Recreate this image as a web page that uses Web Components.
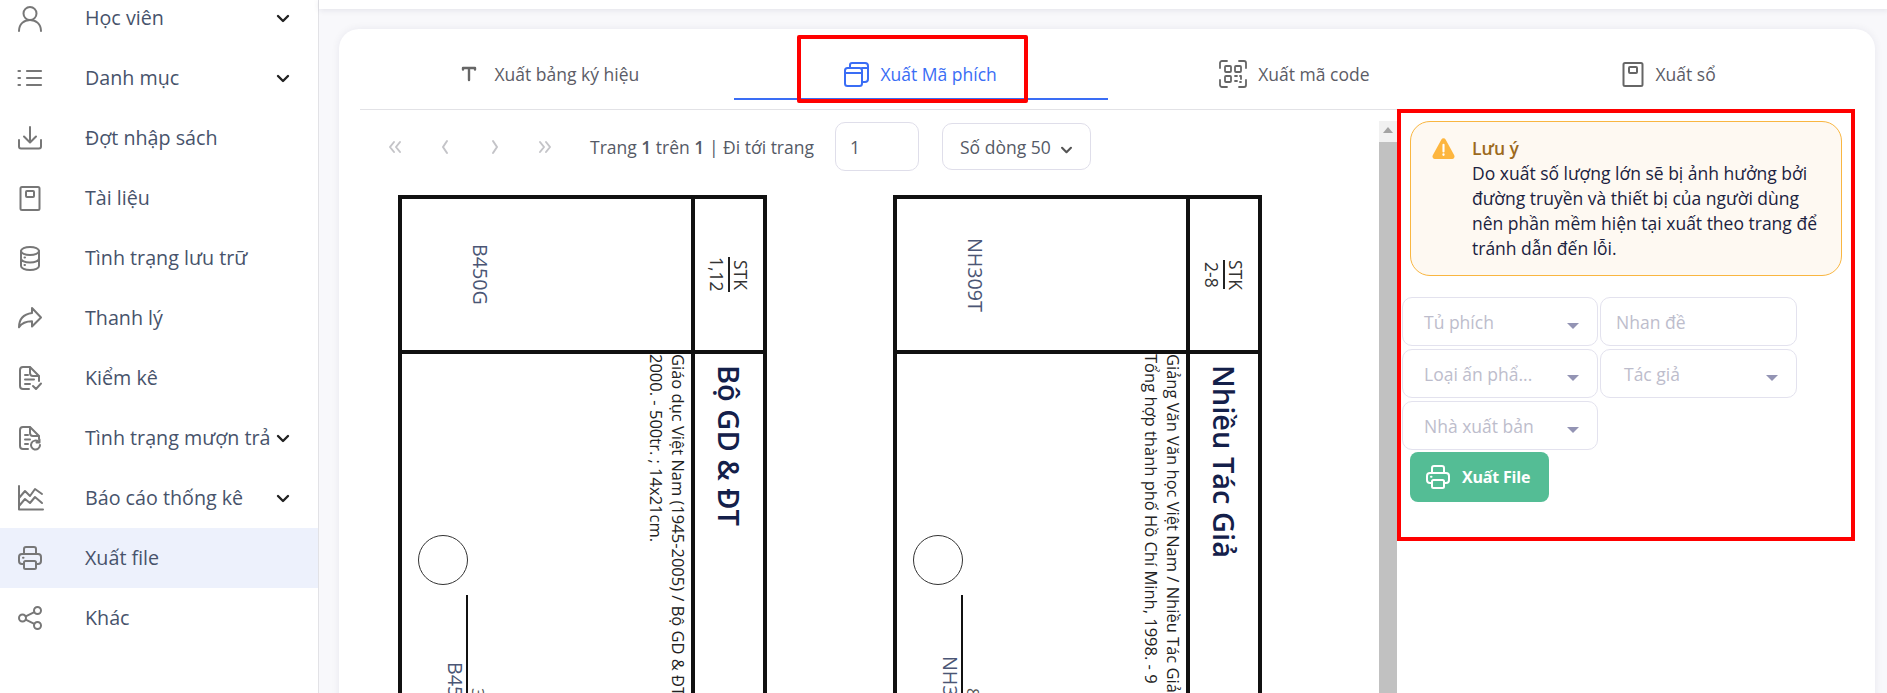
<!DOCTYPE html>
<html lang="vi">
<head>
<meta charset="utf-8">
<title>Xuất file</title>
<style>
  html, body { margin: 0; height: 693px; overflow: hidden; background: #f8f8fb; font-family: "Open Sans", sans-serif; }
</style>
</head>
<body>
<app-shell></app-shell>

<script>
const ICONS = {
  user: '<circle cx="12" cy="7.5" r="6.5"/><path d="M1 25c0-7 5-11 11-11s11 4 11 11"/>',
  list: '<path d="M9 5h14M9 12h14M9 19h14" stroke-width="2.2"/><path d="M0.5 5h1.5M0.5 12h1.5M0.5 19h1.5" stroke-width="2.2"/>',
  download: '<path d="M12 1v15M6 10.5l6 6 6-6"/><path d="M1 14v6.5a2 2 0 0 0 2 2h18a2 2 0 0 0 2-2V14"/>',
  book: '<rect x="2.5" y="1" width="19" height="23" rx="1.5"/><rect x="8" y="5" width="8" height="6" rx="1"/>',
  db: '<ellipse cx="12" cy="5" rx="9" ry="4"/><path d="M3 5v15c0 2.2 4 4 9 4s9-1.800 9-4V5M3 12.500c0 2.200 4 4 9 4s9-1.800 9-4"/><path d="M6.500 11.500h.5M6.500 19h.5"/>',
  forward: '<path d="M14 2l9 9.500-9 9v-5.200c-6 0-10 1.500-13 6 0-8 4-13 13-14.300z" stroke-linejoin="round"/>',
  doccheck: '<path d="M11 23H5a3 3 0 0 1-3-3V4a3 3 0 0 1 3-3h7l9 9v5"/><path d="M12 1.500V7a3 3 0 0 0 3 3h5.500M7 9h3M7 13.500h9M7 18h5"/><path d="M15 20l3 3 5-5.500"/>',
  docsync: '<path d="M10 23H5a3 3 0 0 1-3-3V4a3 3 0 0 1 3-3h7l9 9v3"/><path d="M12 1.500V7a3 3 0 0 0 3 3h5.500M7 9h3M7 13.500h5M7 18h3"/><path d="M22 19a4.500 4.500 0 1 1-1.500-3.300M21.500 13.500v3h-3"/>',
  chart: '<path d="M1 0v23.500h24"/><path d="M1 12l6-7 5 5 5-7 7 5M1 20l6-7 5 4 5-6 7 6"/>',
  printer: '<path d="M6 8V3a2 2 0 0 1 2-2h8a2 2 0 0 1 2 2v5"/><path d="M6 18H4a3 3 0 0 1-3-3v-4a3 3 0 0 1 3-3h16a3 3 0 0 1 3 3v4a3 3 0 0 1-3 3h-2"/><rect x="6" y="15" width="12" height="8" rx="1.500"/><path d="M5 11.800h.5"/>',
  nodes: '<circle cx="4.500" cy="12" r="3.500"/><circle cx="19.500" cy="4.500" r="3.500"/><circle cx="19.500" cy="19.500" r="3.500"/><path d="M7.700 10.400l8.600-4.300M7.700 13.600l8.600 4.300"/>',
  text: '<path d="M1 2.500V1h12v1.500M7 1v12"/>',
  cards: '<rect x="1" y="6" width="17" height="18" rx="2.500"/><path d="M1 11h17M6 6V3a2 2 0 0 1 2-2h13a3 3 0 0 1 3 3v13a3 3 0 0 1-3 3h-3M18 6h6"/>',
  qr: '<path d="M1 8V3a2 2 0 0 1 2-2h5M20 1h5a2 2 0 0 1 2 2v5M27 20v5a2 2 0 0 1-2 2h-5M8 27H3a2 2 0 0 1-2-2v-5"/><rect x="6" y="6" width="6" height="6" rx="1"/><rect x="16" y="6" width="6" height="6" rx="1"/><rect x="6" y="16" width="6" height="6" rx="1"/><path d="M16 16h2M21 16h1v3M16 21h2M21 22h1"/>',
  warn: '<path d="M9.800 1.600a2.500 2.500 0 0 1 4.400 0l9 16.500a2.500 2.500 0 0 1-2.200 3.700H3a2.500 2.500 0 0 1-2.200-3.700z" fill="#fdb63f" stroke="none"/><path d="M12 7v7" stroke="#fff" stroke-width="2.200"/><path d="M12 17.200v.4" stroke="#fff" stroke-width="2.400"/>',
  chevron: '<path d="M2 2l5 5 5-5"/>',
  first: '<path d="M6 2L2 7l4 5M12 2L8 7l4 5"/>',
  prev: '<path d="M9 1L5 7l4 6"/>',
  next: '<path d="M5 1l4 6-4 6"/>',
  last: '<path d="M2 2l4 5-4 5M8 2l4 5-4 5"/>'
};

class UiIcon extends HTMLElement {
  connectedCallback() {
    const size = this.getAttribute('size') || 24;
    const box = this.getAttribute('box') || '0 0 24 24';
    this.attachShadow({ mode: 'open' });
    this.shadowRoot.innerHTML = `
      <style>
        :host { display: inline-flex; flex: none; color: inherit; }
        svg { display: block; overflow: visible; fill: none; stroke: currentColor; stroke-width: ${this.getAttribute('weight') || 2}; stroke-linecap: round; stroke-linejoin: round; }
      </style>
      <svg width="${size}" height="${this.getAttribute('h') || size}" viewBox="${box}">${ICONS[this.getAttribute('name')]}</svg>
    `;
  }
}
customElements.define('ui-icon', UiIcon);

class NavItem extends HTMLElement {
  connectedCallback() {
    const chevron = this.hasAttribute('open-able') ? '<ui-icon class="chev" name="chevron" size="14" box="0 0 14 9" h="9" weight="2.4"></ui-icon>' : '';
    this.attachShadow({ mode: 'open' });
    this.shadowRoot.innerHTML = `
      <style>
        :host { display: flex; align-items: center; height: 60px; padding: 0 28px 0 18px; color: #47536b; font-size: 19.700px; white-space: nowrap; }
        :host([active]) { background: #edf1fc; }
        ui-icon.main { color: #777; margin-right: 43px; }
        .label { flex: 1; min-width: 0; margin-top: -2px; }
        .chev { color: #222; }
      </style>
      <ui-icon class="main" name="${this.getAttribute('icon')}"></ui-icon>
      <span class="label"><slot></slot></span>
      ${chevron}
    `;
  }
}
customElements.define('nav-item', NavItem);

class SideBar extends HTMLElement {
  connectedCallback() {
    this.attachShadow({ mode: 'open' });
    this.shadowRoot.innerHTML = `
      <style>
        :host { display: block; background: #fff; border-right: 1px solid #e2e2e6; height: 693px; overflow: hidden; }
        nav { margin-top: -12px; }
      </style>
      <nav>
        <nav-item icon="user" open-able>Học viên</nav-item>
        <nav-item icon="list" open-able>Danh mục</nav-item>
        <nav-item icon="download">Đợt nhập sách</nav-item>
        <nav-item icon="book">Tài liệu</nav-item>
        <nav-item icon="db">Tình trạng lưu trữ</nav-item>
        <nav-item icon="forward">Thanh lý</nav-item>
        <nav-item icon="doccheck">Kiểm kê</nav-item>
        <nav-item icon="docsync" open-able>Tình trạng mượn trả</nav-item>
        <nav-item icon="chart" open-able>Báo cáo thống kê</nav-item>
        <nav-item icon="printer" active>Xuất file</nav-item>
        <nav-item icon="nodes">Khác</nav-item>
      </nav>
    `;
  }
}
customElements.define('side-bar', SideBar);

class TabItem extends HTMLElement {
  connectedCallback() {
    this.attachShadow({ mode: 'open' });
    this.shadowRoot.innerHTML = `
      <style>
        :host { flex: none; width: 25%; display: flex; align-items: center; justify-content: center; gap: 11px; height: 71px; color: #5c5c66; font-size: 17.500px; box-sizing: border-box; padding-top: 21px; border-bottom: 2px solid transparent; white-space: nowrap; }
        :host([active]) { color: #3a6df5; font-weight: 500; border-bottom-color: #3a6df5; }
      </style>
      <slot name="icon"></slot>
      <span><slot></slot></span>
    `;
  }
}
customElements.define('tab-item', TabItem);

class PagerBar extends HTMLElement {
  connectedCallback() {
    const arrow = n => `<span class="arrow"><ui-icon name="${n}" size="14" box="0 0 14 14" weight="2"></ui-icon></span>`;
    this.attachShadow({ mode: 'open' });
    this.shadowRoot.innerHTML = `
      <style>
        :host { display: flex; align-items: center; height: 49px; color: #555a66; font-size: 17.500px; white-space: nowrap; margin-left: 10px; }
        .arrow { width: 50px; color: #c4c4c8; display: flex; align-items: center; justify-content: center; }
        b { font-weight: 600; }
        .txt { margin-left: 20px; width: 225px; }
        .box { border: 1px solid #dfdeea; border-radius: 10px; box-sizing: border-box; background: #fff; display: flex; align-items: center; }
        .page { width: 84px; height: 49px; margin-left: 20px; padding-left: 14px; }
        .size { width: 149px; height: 47px; margin-left: 23px; padding-left: 17px; gap: 9px; }
        .size ui-icon { color: #555; margin-top: 7px; }
      </style>
      ${arrow('first')}${arrow('prev')}${arrow('next')}${arrow('last')}
      <span class="txt">Trang <b>1</b> trên <b>1</b> | Đi tới trang</span>
      <span class="box page">1</span>
      <span class="box size">Số dòng 50 <ui-icon name="chevron" size="13" box="0 0 14 9" h="8" weight="2.4"></ui-icon></span>
    `;
  }
}
customElements.define('pager-bar', PagerBar);

// the catalog card is printed sideways, so all its text runs in vertical-rl
class CatalogCard extends HTMLElement {
  connectedCallback() {
    const a = n => this.getAttribute(n);
    this.attachShadow({ mode: 'open' });
    this.shadowRoot.innerHTML = `
      <style>
        :host { display: grid; grid-template-columns: 289px 68px; grid-template-rows: 151px 500px; gap: 4px; padding: 4px; width: 369px; box-sizing: border-box; background: #111; flex: none; }
        .cell { background: #fff; writing-mode: vertical-rl; color: #222; }
        .code { display: flex; justify-content: center; align-items: flex-end; padding-left: 67px; font-size: 19.700px; color: #4b5675; line-height: 22px; }
        .frac { display: flex; justify-content: center; align-items: center; font-size: 17.500px; line-height: 22px; color: #333; text-align: center; }
        .frac .top { border-left: 2px solid #222; }
        .title { font-size: 29px; font-weight: 600; color: #14204a; line-height: 68px; padding-top: 11px; white-space: nowrap; }
        .body { display: flex; flex-direction: row-reverse; writing-mode: horizontal-tb; justify-content: space-between; }
        .lines { writing-mode: vertical-rl; white-space: nowrap; font-size: 16.500px; line-height: 22.500px; margin-right: 2px; }
        .mark { padding-left: 16px; width: 50px; }
        .circle { width: 50px; height: 50px; margin-top: 181px; border: 1.300px solid #333; border-radius: 50%; box-sizing: border-box; }
        .call { writing-mode: vertical-rl; margin: 10px 0 0 26px; width: 44px; height: 195px; font-size: 19.700px; line-height: 22px; color: #4b5675; white-space: nowrap; text-align: center; }
        .call .num { border-left: 2px solid #111; line-height: 20px; font-size: 17px; color: #555; }
      </style>
      <div class="cell code">${a('code')}</div>
      <div class="cell frac"><div><div class="top">STK</div><div>${a('copy')}</div></div></div>
      <div class="cell body">
        <div class="lines"><slot></slot></div>
        <div class="mark">
          <div class="circle"></div>
          <div class="call"><div class="num">${a('num')}</div><div>${a('code')}</div></div>
        </div>
      </div>
      <div class="cell title">${a('author')}</div>
    `;
  }
}
customElements.define('catalog-card', CatalogCard);

class NoticeBox extends HTMLElement {
  connectedCallback() {
    this.attachShadow({ mode: 'open' });
    this.shadowRoot.innerHTML = `
      <style>
        :host { display: flex; gap: 17px; margin: 8px 9px 0; height: 155px; box-sizing: border-box; padding: 14px 20px 0 21px; background: #fef9f2; border: 1px solid #f9b641; border-radius: 20px; color: #1b2240; font-size: 17.500px; line-height: 25px; }
        h4 { margin: 0; font-size: 17.500px; font-weight: 600; color: #9c6a1d; }
        ui-icon { margin-top: 2px; color: #fdb63f; }
      </style>
      <ui-icon name="warn" size="23"></ui-icon>
      <div><h4>Lưu ý</h4><slot></slot></div>
    `;
  }
}
customElements.define('notice-box', NoticeBox);

class FilterField extends HTMLElement {
  connectedCallback() {
    const arrow = this.hasAttribute('select') ? '<i></i>' : '';
    this.attachShadow({ mode: 'open' });
    this.shadowRoot.innerHTML = `
      <style>
        :host { display: flex; align-items: center; height: 49px; box-sizing: border-box; border: 1px solid #e3e2ee; border-radius: 10px; background: #fff; color: #bdbdcc; font-size: 17.500px; padding-left: var(--indent, 21px); white-space: nowrap; }
        span { flex: 1; }
        i { width: 0; height: 0; border: 6.500px solid transparent; border-top: 6px solid #9394b4; border-bottom: 0; margin: 8px 18px 0 0; }
      </style>
      <span><slot></slot></span>${arrow}
    `;
  }
}
customElements.define('filter-field', FilterField);

class ExportPanel extends HTMLElement {
  connectedCallback() {
    this.attachShadow({ mode: 'open' });
    this.shadowRoot.innerHTML = `
      <style>
        :host { display: block; width: 458px; height: 432px; margin-top: -1px; box-sizing: border-box; border: 4px solid #f00; background: #fff; flex: none; }
        .grid { display: grid; grid-template-columns: 196px 197px; column-gap: 2px; row-gap: 3px; margin: 21px 0 0 1px; width: 395px; }
        button { display: flex; align-items: center; gap: 12px; width: 139px; height: 50px; margin: 2px 0 0 9px; padding: 0 0 0 16px; border: 0; border-radius: 8px; background: #54bd95; color: #fff; font: 700 16px "Open Sans", sans-serif; letter-spacing: -.2px; }
      </style>
      <slot name="notice"></slot>
      <div class="grid"><slot></slot></div>
      <button><ui-icon name="printer"></ui-icon>Xuất File</button>
    `;
  }
}
customElements.define('export-panel', ExportPanel);

class MainCard extends HTMLElement {
  connectedCallback() {
    this.attachShadow({ mode: 'open' });
    this.shadowRoot.innerHTML = `
      <style>
        :host { display: block; position: relative; margin: 20px 14px 0 20px; height: 700px; box-sizing: border-box; padding: 0 20px 0 21px; background: #fff; border-radius: 20px 20px 0 0; box-shadow: 0 0 8px rgba(30,30,70,.07); }
        .tabs { height: 81px; border-bottom: 1px solid #e2e2e6; box-sizing: border-box; }
        .tabwrap { display: flex; height: 71px; }
        .body { display: flex; align-items: flex-start; }
        .left { width: 1037px; flex: none; height: 600px; overflow: hidden; position: relative; }
        .pager { padding-top: 12px; }
        .cards { display: flex; gap: 126px; margin: 24px 0 0 38px; }
        .scroll { position: absolute; top: 11px; right: 0; width: 18px; height: 589px; background: #f1f1f1; }
        .scroll i { display: block; width: 0; margin: 6px auto 0; border: 5.500px solid transparent; border-bottom: 6px solid #a3a3a3; border-top: 0; }
        .scroll b { display: block; height: 560px; margin-top: 9px; background: #c1c1c1; }
        .mark { position: absolute; left: 458px; top: 6px; width: 231px; height: 68px; box-sizing: border-box; border: 4px solid #f00; border-radius: 2px; pointer-events: none; }
      </style>
      <div class="tabs"><div class="tabwrap"><slot name="tabs"></slot></div></div>
      <div class="body">
        <div class="left">
          <div class="pager"><pager-bar></pager-bar></div>
          <div class="cards"><slot name="cards"></slot></div>
          <div class="scroll"><i></i><b></b></div>
        </div>
        <slot name="panel"></slot>
      </div>
      <div class="mark"></div>
    `;
  }
}
customElements.define('main-card', MainCard);

class AppShell extends HTMLElement {
  connectedCallback() {
    this.attachShadow({ mode: 'open' });
    this.shadowRoot.innerHTML = `
      <style>
        :host { display: grid; grid-template-columns: 319px 1fr; height: 693px; overflow: hidden; font-family: "Open Sans", sans-serif; }
        .top { height: 9px; background: #fff; box-shadow: 0 1px 6px rgba(30,30,70,.1); }
        .ti { color: #666; }
        .on { color: #3a6df5; }
      </style>
      <side-bar></side-bar>
      <div>
        <div class="top"></div>
        <main-card>
          <tab-item slot="tabs" style="padding-left:8px"><ui-icon class="ti" slot="icon" name="text" size="14" box="0 0 14 14" weight="2.400" style="margin-right:7px"></ui-icon>Xuất bảng ký hiệu</tab-item>
          <tab-item slot="tabs" active><ui-icon class="on" slot="icon" name="cards" size="25" box="0 0 25 25"></ui-icon>Xuất Mã phích</tab-item>
          <tab-item slot="tabs"><ui-icon class="ti" slot="icon" name="qr" size="28" box="0 0 28 28" weight="1.800"></ui-icon>Xuất mã code</tab-item>
          <tab-item slot="tabs"><ui-icon class="ti" slot="icon" name="book" size="24" weight="2"></ui-icon>Xuất sổ</tab-item>

          <catalog-card slot="cards" code="B450G" copy="1,12" author="Bộ GD &amp; ĐT" num="3">Giáo dục Việt Nam (1945-2005) / Bộ GD &amp; ĐT<br>2000. - 500tr. ; 14x21cm.</catalog-card>
          <catalog-card slot="cards" code="NH309T" copy="2-8" author="Nhiều Tác Giả" num="8">Giảng Văn Văn học Việt Nam / Nhiều Tác Giả<br>Tổng hợp thành phố Hồ Chí Minh, 1998. - 9</catalog-card>

          <export-panel slot="panel">
            <notice-box slot="notice">Do xuất số lượng lớn sẽ bị ảnh hưởng bởi đường truyền và thiết bị của người dùng nên phần mềm hiện tại xuất theo trang để tránh dẫn đến lỗi.</notice-box>
            <filter-field select>Tủ phích</filter-field>
            <filter-field style="--indent:15px">Nhan đề</filter-field>
            <filter-field select>Loại ấn phẩ...</filter-field>
            <filter-field select style="--indent:23px">Tác giả</filter-field>
            <filter-field select>Nhà xuất bản</filter-field>
          </export-panel>
        </main-card>
      </div>
    `;
  }
}
customElements.define('app-shell', AppShell);
</script>
</body>
</html>
